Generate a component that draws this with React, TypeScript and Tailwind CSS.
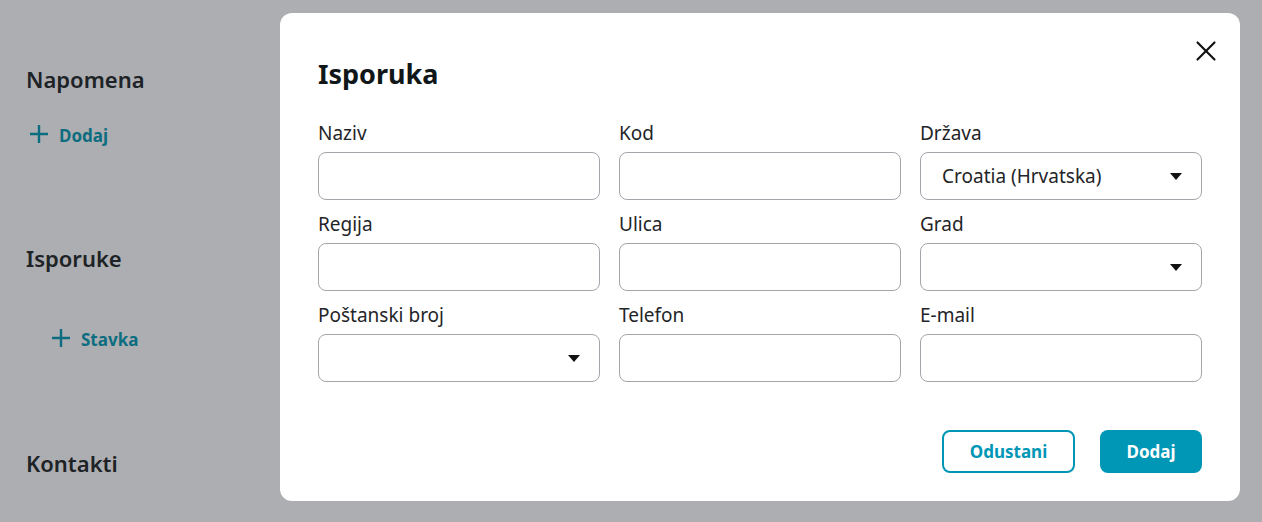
import { X } from "lucide-react";

const font = { fontFamily: '"Noto Sans", "Open Sans", sans-serif' };

function Caret() {
  return (
    <svg width="12" height="7" viewBox="0 0 12 7" className="shrink-0">
      <path d="M0 0h12L6 7z" fill="#111" />
    </svg>
  );
}

function PlusIcon() {
  return (
    <svg width="18" height="18" viewBox="0 0 18 18" className="shrink-0">
      <path d="M9 0v18M0 9h18" stroke="currentColor" strokeWidth="2.4" />
    </svg>
  );
}

function Field({ label, value, select }: { label: string; value?: string; select?: boolean }) {
  return (
    <div className="flex flex-col">
      <label className="text-[19px] leading-[24px] text-[#1f2528] mb-[7px]">{label}</label>
      <div className="h-[48px] rounded-[8px] border border-[#a2a6ab] bg-white flex items-center justify-between pl-[21px] pr-[19px]">
        <span className="text-[19px] text-[#1f2528]">{value ?? ""}</span>
        {select && <Caret />}
      </div>
    </div>
  );
}

export default function App() {
  return (
    <div className="w-[1262px] h-[522px] bg-[#adaeb1] flex overflow-hidden" style={font}>
      {/* page behind the overlay */}
      <div className="w-[280px] shrink-0 pl-[26px] pt-[64px] flex flex-col">
        <h2 className="text-[22px] font-semibold text-[#1d2326] leading-[30px]">Napomena</h2>
        <button className="flex items-center gap-[11px] ml-[4px] mt-[26px] text-[#0c6d80] font-bold text-[17px]">
          <PlusIcon />
          <span className="mt-[3px]">Dodaj</span>
        </button>
        <h2 className="mt-[94px] text-[22px] font-semibold text-[#1d2326] leading-[30px]">Isporuke</h2>
        <button className="flex items-center gap-[11px] ml-[26px] mt-[51px] text-[#0c6d80] font-bold text-[17px]">
          <PlusIcon />
          <span className="mt-[3px]">Stavka</span>
        </button>
        <h2 className="mt-[96px] text-[22px] font-semibold text-[#1d2326] leading-[30px]">Kontakti</h2>
      </div>

      {/* modal */}
      <div className="mt-[13px] w-[960px] h-[488px] bg-white rounded-[12px] px-[38px] pt-[44px] flex flex-col relative">
        <button className="absolute top-[21px] right-[17px] text-[#111] flex">
          <X size={34} strokeWidth={1.5} />
        </button>
        <h1 className="text-[27px] font-bold text-[#111719] leading-[34px]">Isporuka</h1>
        <div className="grid grid-cols-3 gap-x-[19px] gap-y-[12px] mt-[30px]">
          <Field label="Naziv" />
          <Field label="Kod" />
          <Field label="Država" value="Croatia (Hrvatska)" select />
          <Field label="Regija" />
          <Field label="Ulica" />
          <Field label="Grad" select />
          <Field label="Poštanski broj" select />
          <Field label="Telefon" />
          <Field label="E-mail" />
        </div>
        <div className="flex justify-end gap-[25px] mt-[48px]">
          <button className="w-[133px] h-[43px] rounded-[8px] border-2 border-[#0096b6] text-[#0096b6] font-bold text-[17px]">
            Odustani
          </button>
          <button className="w-[102px] h-[43px] rounded-[8px] bg-[#0096b6] text-white font-bold text-[17px]">
            Dodaj
          </button>
        </div>
      </div>
    </div>
  );
}
